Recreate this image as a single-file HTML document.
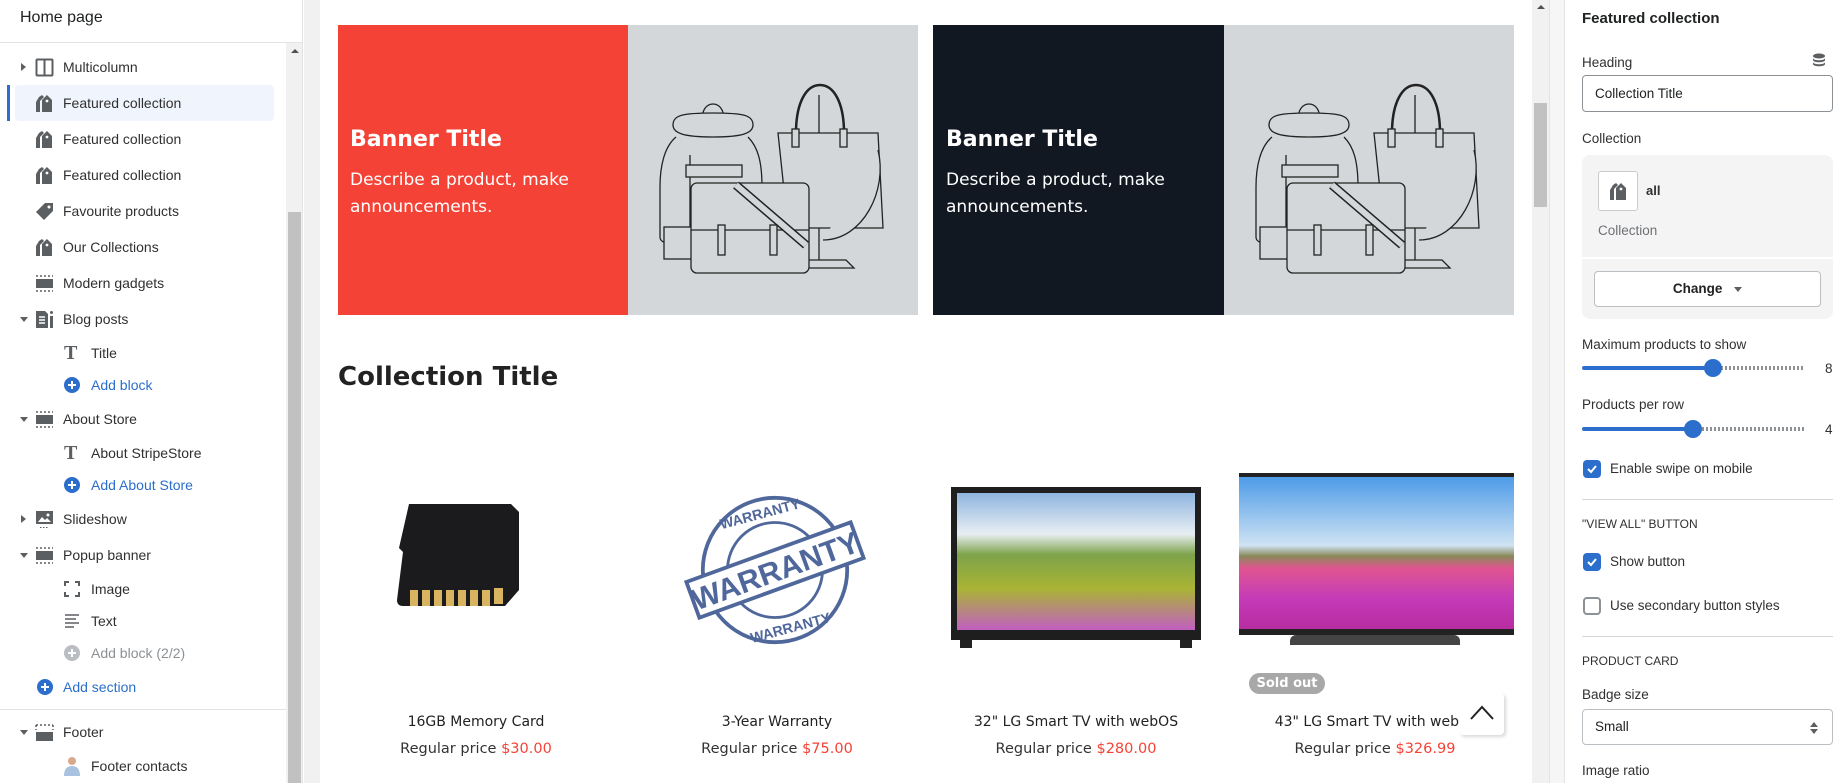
<!DOCTYPE html>
<html><head><meta charset="utf-8"><style>
*{box-sizing:border-box;margin:0;padding:0}
body{width:1848px;height:783px;overflow:hidden;background:#fff;font-family:"Liberation Sans",sans-serif;color:#303030;position:relative}
.abs{position:absolute}
.side{left:0;top:0;width:303px;height:783px;background:#fff;border-right:1px solid #e3e3e3}
.row{position:absolute;left:0;height:36px;display:flex;align-items:center;font-size:14px;color:#303030;white-space:nowrap}
.row .t{position:absolute;left:63px}
.row.b .t{left:91px}
.blue{color:#2c6ecb}
.caret{position:absolute;left:21px;width:0;height:0}
.cr{border-top:4px solid transparent;border-bottom:4px solid transparent;border-left:5px solid #5c5f62}
.cd{border-left:4px solid transparent;border-right:4px solid transparent;border-top:5px solid #5c5f62;left:20px}
.ic{position:absolute;left:35px}
.bi{position:absolute;left:64px}
.prod{position:absolute;text-align:center;font-family:"DejaVu Sans","Liberation Sans",sans-serif;width:290px}
.pt{font-size:14px;color:#222;top:0}
.pp{font-size:14.5px;color:#333}
.pp b{font-weight:normal;color:#f44336}
.lbl{position:absolute;left:1582px;font-size:13.5px;color:#303030}
.cb{position:absolute;left:1583px;width:18px;height:18px;border-radius:4px;background:#2c6ecb}
.hr{position:absolute;left:1582px;width:251px;height:1px;background:#d6d6d6}
</style></head><body>

<div class="abs side">
  <div class="abs" style="left:20px;top:9px;font-size:16px;color:#202223">Home page</div>
  <div class="abs" style="left:0;top:42px;width:303px;height:1px;background:#e1e3e5"></div>
  <div class="abs" style="left:286px;top:43px;width:16px;height:740px;background:#f1f1f1"></div>
  <div class="abs" style="left:288px;top:212px;width:13px;height:571px;background:#c1c1c1"></div>
  <div class="abs" style="left:291px;top:49px;border-left:4px solid transparent;border-right:4px solid transparent;border-bottom:4px solid #505050"></div>

  <div class="abs" style="left:15px;top:85px;width:259px;height:36px;background:#f0f5fd;border-radius:4px"></div>
  <div class="abs" style="left:7px;top:85px;width:3px;height:36px;background:#2c6ecb"></div>

  <div class="row" style="top:49px"><span class="caret cr"></span><svg class="ic" width="19" height="19" viewBox="0 0 19 19"><rect x="1.5" y="1.5" width="16" height="16" rx="1" fill="none" stroke="#5c5f62" stroke-width="2"/><line x1="9.5" y1="2" x2="9.5" y2="17" stroke="#5c5f62" stroke-width="2"/></svg><span class="t">Multicolumn</span></div>
  <div class="row" style="top:85px"><svg class="ic" width="19" height="19" viewBox="0 0 19 19"><path d="M4 3l3-2 2 2-4 4v11H1V8z" fill="#5c5f62"/><path d="M12 1l5 5v12H7V6z" fill="#5c5f62"/><circle cx="12" cy="7" r="1.4" fill="#fff"/></svg><span class="t">Featured collection</span></div>
  <div class="row" style="top:121px"><svg class="ic" width="19" height="19" viewBox="0 0 19 19"><path d="M4 3l3-2 2 2-4 4v11H1V8z" fill="#5c5f62"/><path d="M12 1l5 5v12H7V6z" fill="#5c5f62"/><circle cx="12" cy="7" r="1.4" fill="#fff"/></svg><span class="t">Featured collection</span></div>
  <div class="row" style="top:157px"><svg class="ic" width="19" height="19" viewBox="0 0 19 19"><path d="M4 3l3-2 2 2-4 4v11H1V8z" fill="#5c5f62"/><path d="M12 1l5 5v12H7V6z" fill="#5c5f62"/><circle cx="12" cy="7" r="1.4" fill="#fff"/></svg><span class="t">Featured collection</span></div>
  <div class="row" style="top:193px"><svg class="ic" width="19" height="19" viewBox="0 0 19 19"><path d="M10 1h8v8l-9 9-8-8z" fill="#5c5f62"/><circle cx="14" cy="5" r="1.5" fill="#fff"/></svg><span class="t">Favourite products</span></div>
  <div class="row" style="top:229px"><svg class="ic" width="19" height="19" viewBox="0 0 19 19"><path d="M4 3l3-2 2 2-4 4v11H1V8z" fill="#5c5f62"/><path d="M12 1l5 5v12H7V6z" fill="#5c5f62"/><circle cx="12" cy="7" r="1.4" fill="#fff"/></svg><span class="t">Our Collections</span></div>
  <div class="row" style="top:265px"><svg class="ic" width="19" height="19" viewBox="0 0 19 19"><rect x="1" y="5" width="17" height="9" fill="#5c5f62"/><path d="M1 2h17M1 17h17" stroke="#5c5f62" stroke-width="1.5" stroke-dasharray="2 2"/></svg><span class="t">Modern gadgets</span></div>
  <div class="row" style="top:301px"><span class="caret cd"></span><svg class="ic" width="19" height="19" viewBox="0 0 19 19"><path d="M1 1h9l3 3v14H1z" fill="#5c5f62"/><path d="M4 7h6M4 10h6M4 13h6" stroke="#fff" stroke-width="1.5"/><rect x="15" y="6" width="3" height="12" fill="#5c5f62"/><circle cx="16.5" cy="2.5" r="1.5" fill="#5c5f62"/></svg><span class="t">Blog posts</span></div>
  <div class="row b" style="top:335px"><span class="bi" style="font-family:'Liberation Serif',serif;font-weight:bold;font-size:20px;color:#5c5f62;left:64px">T</span><span class="t">Title</span></div>
  <div class="row b" style="top:367px"><svg class="bi" width="16" height="16" viewBox="0 0 16 16"><circle cx="8" cy="8" r="8" fill="#2c6ecb"/><path d="M8 4v8M4 8h8" stroke="#fff" stroke-width="2"/></svg><span class="t blue">Add block</span></div>
  <div class="row" style="top:401px"><span class="caret cd"></span><svg class="ic" width="19" height="19" viewBox="0 0 19 19"><rect x="1" y="5" width="17" height="9" fill="#5c5f62"/><path d="M1 2h17M1 17h17" stroke="#5c5f62" stroke-width="1.5" stroke-dasharray="2 2"/></svg><span class="t">About Store</span></div>
  <div class="row b" style="top:435px"><span class="bi" style="font-family:'Liberation Serif',serif;font-weight:bold;font-size:20px;color:#5c5f62">T</span><span class="t">About StripeStore</span></div>
  <div class="row b" style="top:467px"><svg class="bi" width="16" height="16" viewBox="0 0 16 16"><circle cx="8" cy="8" r="8" fill="#2c6ecb"/><path d="M8 4v8M4 8h8" stroke="#fff" stroke-width="2"/></svg><span class="t blue">Add About Store</span></div>
  <div class="row" style="top:501px"><span class="caret cr"></span><svg class="ic" width="19" height="19" viewBox="0 0 19 19"><rect x="1" y="1" width="17" height="13" fill="#5c5f62"/><path d="M3 12l4-5 3 3 2-2 4 4z" fill="#fff"/><circle cx="13" cy="5" r="1.5" fill="#fff"/><path d="M5 17.5h9" stroke="#5c5f62" stroke-dasharray="1.5 1.5"/></svg><span class="t">Slideshow</span></div>
  <div class="row" style="top:537px"><span class="caret cd"></span><svg class="ic" width="19" height="19" viewBox="0 0 19 19"><rect x="1" y="5" width="17" height="9" fill="#5c5f62"/><path d="M1 2h17M1 17h17" stroke="#5c5f62" stroke-width="1.5" stroke-dasharray="2 2"/></svg><span class="t">Popup banner</span></div>
  <div class="row b" style="top:571px"><svg class="bi" width="16" height="16" viewBox="0 0 16 16" fill="none" stroke="#5c5f62" stroke-width="2"><path d="M1 5V1h4M11 1h4v4M15 11v4h-4M5 15H1v-4"/></svg><span class="t">Image</span></div>
  <div class="row b" style="top:603px"><svg class="bi" width="16" height="16" viewBox="0 0 16 16" stroke="#5c5f62" stroke-width="1.6"><path d="M1 2h14M1 6h11M1 10h14M1 14h9"/></svg><span class="t">Text</span></div>
  <div class="row b" style="top:635px"><svg class="bi" width="16" height="16" viewBox="0 0 16 16"><circle cx="8" cy="8" r="8" fill="#babec3"/><path d="M8 4v8M4 8h8" stroke="#fff" stroke-width="2"/></svg><span class="t" style="color:#8c9196">Add block (2/2)</span></div>
  <div class="row" style="top:669px"><svg class="ic" width="16" height="16" viewBox="0 0 16 16" style="left:37px"><circle cx="8" cy="8" r="8" fill="#2c6ecb"/><path d="M8 4v8M4 8h8" stroke="#fff" stroke-width="2"/></svg><span class="t blue">Add section</span></div>
  <div class="abs" style="left:0;top:709px;width:286px;height:1px;background:#e1e3e5"></div>
  <div class="row" style="top:714px"><span class="caret cd"></span><svg class="ic" width="19" height="19" viewBox="0 0 19 19"><rect x="1" y="9" width="17" height="9" fill="#5c5f62"/><path d="M1 2h17M1 2v5M18 2v5" stroke="#5c5f62" stroke-width="1.5" stroke-dasharray="2 2"/></svg><span class="t">Footer</span></div>
  <div class="row b" style="top:748px"><svg class="bi" width="20" height="20" viewBox="0 0 20 20" style="left:62px"><circle cx="10" cy="5" r="4" fill="#d9a98e"/><path d="M2 20c0-8 4-10 8-10s8 2 8 10z" fill="#a9c2e0"/></svg><span class="t">Footer contacts</span></div>
</div>
<div class="abs" style="left:304px;top:0;width:16px;height:783px;background:#f1f1f1"></div>

<svg width="0" height="0" style="position:absolute"><defs>
<g id="bags" fill="#d4d7da" stroke="#222" stroke-width="1.3">
  <path d="M75 95c-2-10 4-16 10-16s12 6 10 16"/>
  <path d="M45 100c0-10 10-12 40-12s40 2 40 12c0 8-10 12-40 12s-40-4-40-12z"/>
  <path d="M48 112c-12 10-16 30-16 50v50c0 4 4 6 10 6h20V130"/>
  <path d="M120 112c10 10 14 25 14 50"/>
  <rect x="36" y="202" width="40" height="32"/>
  <rect x="58" y="140" width="56" height="12"/>
  <path d="M191 70v165M178 235h40l8 8h-50z"/>
  <path d="M168 108c0-30 10-48 24-48s24 18 24 48" fill="none" stroke-width="2.5"/>
  <path d="M150 108h100l5 95h-95z"/>
  <rect x="164" y="104" width="7" height="18"/><rect x="212" y="104" width="7" height="18"/>
  <path d="M250 125c10 40-15 90-55 90"/>
  <rect x="63" y="158" width="118" height="90" rx="6"/>
  <path d="M63 205h118"/>
  <path d="M108 160l70 60" stroke-width="9" stroke="#222"/>
  <path d="M108 160l70 60" stroke-width="6" stroke="#d4d7da"/>
  <rect x="90" y="200" width="7" height="30"/><rect x="142" y="200" width="7" height="30"/>
</g></defs></svg>

<div class="abs" style="left:338px;top:25px;width:290px;height:290px;background:#f44336"></div>
<div class="abs" style="left:628px;top:25px;width:290px;height:290px;background:#d4d7da"><svg width="290" height="290" viewBox="0 0 290 290"><use href="#bags"/></svg></div>
<div class="abs" style="left:933px;top:25px;width:291px;height:290px;background:#111822"></div>
<div class="abs" style="left:1224px;top:25px;width:290px;height:290px;background:#d4d7da"><svg width="290" height="290" viewBox="0 0 290 290"><use href="#bags"/></svg></div>
<div class="abs" style="left:350px;top:127px;color:#fff;font-family:'DejaVu Sans',sans-serif;font-weight:bold;font-size:22px">Banner Title</div>
<div class="abs" style="left:350px;top:167px;color:#fff;font-family:'DejaVu Sans',sans-serif;font-size:17px;line-height:27px;width:240px">Describe a product, make announcements.</div>
<div class="abs" style="left:946px;top:127px;color:#fff;font-family:'DejaVu Sans',sans-serif;font-weight:bold;font-size:22px">Banner Title</div>
<div class="abs" style="left:946px;top:167px;color:#fff;font-family:'DejaVu Sans',sans-serif;font-size:17px;line-height:27px;width:240px">Describe a product, make announcements.</div>

<div class="abs" style="left:338px;top:362px;font-family:'DejaVu Sans',sans-serif;font-weight:bold;font-size:26px;color:#222">Collection Title</div>

<svg class="abs" style="left:395px;top:500px" width="150" height="118" viewBox="0 0 150 118"><path d="M14 4h102l8 8v78l-14 16H8q-6 0-6-6l6-48-4-4z" fill="#1b1b1d"/><g fill="#d8b460"><rect x="15" y="90" width="8" height="16"/><rect x="27" y="90" width="8" height="16"/><rect x="39" y="90" width="8" height="16"/><rect x="51" y="90" width="8" height="16"/><rect x="63" y="90" width="8" height="16"/><rect x="75" y="90" width="8" height="16"/><rect x="87" y="90" width="8" height="16"/><rect x="99" y="88" width="9" height="16"/></g></svg>
<svg class="abs" style="left:680px;top:480px" width="190" height="180" viewBox="0 0 200 180"><g fill="none" stroke="#4f679b"><circle cx="100" cy="90" r="76" stroke-width="4"/><circle cx="100" cy="90" r="50" stroke-width="3"/></g><g transform="rotate(-20 100 90)"><rect x="8" y="70" width="184" height="40" fill="#fff" stroke="#4f679b" stroke-width="4"/><text x="100" y="102" text-anchor="middle" font-family="Liberation Sans" font-weight="bold" font-size="32" fill="#4f679b">WARRANTY</text></g><text x="100" y="34" text-anchor="middle" font-family="Liberation Sans" font-weight="bold" font-size="15" fill="#4f679b" transform="rotate(-15 100 90)">WARRANTY</text><text x="100" y="158" text-anchor="middle" font-family="Liberation Sans" font-weight="bold" font-size="15" fill="#4f679b" transform="rotate(-15 100 90)">WARRANTY</text></svg>
<div class="abs" style="left:951px;top:487px;width:250px;height:153px;background:#1e1e1e;padding:6px 6px 10px"><div style="width:100%;height:100%;background:linear-gradient(180deg,#8fb5e0 0%,#e8eef2 30%,#7da34a 45%,#a9b434 70%,#c25fc1 100%)"></div></div>
<div class="abs" style="left:960px;top:640px;width:12px;height:8px;background:#222"></div><div class="abs" style="left:1180px;top:640px;width:12px;height:8px;background:#222"></div>
<div class="abs" style="left:1239px;top:473px;width:275px;height:162px;background:#222;padding:4px 0 6px"><div style="width:100%;height:100%;background:linear-gradient(180deg,#4d9be8 0%,#cfe3f3 45%,#8a8a5a 52%,#e05590 60%,#c43bb8 80%,#b72ca0 100%)"></div></div>
<div class="abs" style="left:1290px;top:635px;width:170px;height:10px;border-radius:6px 6px 0 0;background:#444"></div>
<div class="abs" style="left:1249px;top:673px;width:76px;height:21px;border-radius:11px;background:#a8a8a8;color:#fff;font-family:'DejaVu Sans',sans-serif;font-weight:bold;font-size:13px;text-align:center;line-height:21px">Sold out</div>

<div class="prod pt" style="left:331px;top:714px">16GB Memory Card</div>
<div class="prod pp" style="left:331px;top:741px">Regular price <b>$30.00</b></div>
<div class="prod pt" style="left:632px;top:714px">3-Year Warranty</div>
<div class="prod pp" style="left:632px;top:741px">Regular price <b>$75.00</b></div>
<div class="prod pt" style="left:931px;top:714px">32" LG Smart TV with webOS</div>
<div class="prod pp" style="left:931px;top:741px">Regular price <b>$280.00</b></div>
<div class="prod pt" style="left:1239px;top:714px;width:220px;text-align:right;overflow:hidden;white-space:nowrap">43" LG Smart TV with web</div>
<div class="prod pp" style="left:1230px;top:741px">Regular price <b>$326.99</b></div>
<div class="abs" style="left:1459px;top:693px;width:45px;height:42px;background:#fff;border-radius:4px;box-shadow:2px 2px 3px rgba(0,0,0,.15)"><svg width="45" height="42"><path d="M12 26l11-12 11 12" fill="none" stroke="#222" stroke-width="2"/></svg></div>

<div class="abs" style="left:1532px;top:0;width:17px;height:783px;background:#f1f1f1"></div>
<div class="abs" style="left:1534px;top:103px;width:13px;height:104px;background:#c1c1c1"></div>
<div class="abs" style="left:1537px;top:5px;border-left:4px solid transparent;border-right:4px solid transparent;border-bottom:4px solid #505050"></div>
<div class="abs" style="left:1549px;top:0;width:16px;height:783px;background:#f6f6f7;border-left:1px solid #e3e3e3;border-right:1px solid #e3e3e3"></div>

<div class="lbl" style="top:10px;font-weight:bold;font-size:15px;color:#202223">Featured collection</div>
<div class="lbl" style="top:55px">Heading</div>
<svg class="abs" style="left:1812px;top:53px" width="14" height="14" viewBox="0 0 14 14" fill="#5c5f62"><ellipse cx="7" cy="3" rx="6" ry="2.5"/><path d="M1 5c0 3 12 3 12 0v2c0 3-12 3-12 0zM1 9c0 3 12 3 12 0v2c0 3-12 3-12 0z"/></svg>
<div class="abs" style="left:1582px;top:75px;width:251px;height:37px;border:1px solid #8c9196;border-radius:4px;font-size:13.5px;padding:10px 12px;color:#202223">Collection Title</div>
<div class="lbl" style="top:131px">Collection</div>
<div class="abs" style="left:1582px;top:155px;width:251px;height:164px;background:#f4f4f4;border-radius:8px"></div>
<div class="abs" style="left:1582px;top:257px;width:251px;height:2px;background:#fff"></div>
<div class="abs" style="left:1598px;top:171px;width:40px;height:40px;background:#fff;border:1px solid #c9cccf;border-radius:3px"><svg style="margin:10px" width="19" height="19" viewBox="0 0 19 19"><path d="M4 3l3-2 2 2-4 4v11H1V8z" fill="#5c5f62"/><path d="M12 1l5 5v12H7V6z" fill="#5c5f62"/><circle cx="12" cy="7" r="1.4" fill="#fff"/></svg></div>
<div class="lbl" style="left:1646px;top:183px;font-weight:bold;font-size:13px">all</div>
<div class="lbl" style="left:1598px;top:223px;color:#6d7175">Collection</div>
<div class="abs" style="left:1594px;top:271px;width:227px;height:36px;background:#fff;border:1px solid #babfc3;border-radius:4px;text-align:center;line-height:34px;font-size:13.5px;font-weight:bold;color:#202223">Change <span style="display:inline-block;margin-left:8px;vertical-align:middle;border-left:4px solid transparent;border-right:4px solid transparent;border-top:5px solid #5c5f62"></span></div>

<div class="lbl" style="top:337px">Maximum products to show</div>
<div class="abs" style="left:1582px;top:366px;width:131px;height:4px;background:#2c6ecb;border-radius:2px"></div>
<div class="abs" style="left:1713px;top:366px;width:92px;height:4px;background:repeating-linear-gradient(90deg,#8c9196 0 2px,#fff 2px 4px)"></div>
<div class="abs" style="left:1704px;top:359px;width:18px;height:18px;border-radius:50%;background:#2c6ecb"></div>
<div class="lbl" style="left:1825px;top:361px">8</div>

<div class="lbl" style="top:397px">Products per row</div>
<div class="abs" style="left:1582px;top:427px;width:112px;height:4px;background:#2c6ecb;border-radius:2px"></div>
<div class="abs" style="left:1694px;top:427px;width:111px;height:4px;background:repeating-linear-gradient(90deg,#8c9196 0 2px,#fff 2px 4px)"></div>
<div class="abs" style="left:1684px;top:420px;width:18px;height:18px;border-radius:50%;background:#2c6ecb"></div>
<div class="lbl" style="left:1825px;top:422px">4</div>

<div class="cb" style="top:460px"><svg width="18" height="18"><path d="M5 9l3 3 5-6" fill="none" stroke="#fff" stroke-width="2"/></svg></div>
<div class="lbl" style="left:1610px;top:461px">Enable swipe on mobile</div>
<div class="hr" style="top:499px"></div>
<div class="lbl" style="top:517px;font-size:12px">"VIEW ALL" BUTTON</div>
<div class="cb" style="top:553px"><svg width="18" height="18"><path d="M5 9l3 3 5-6" fill="none" stroke="#fff" stroke-width="2"/></svg></div>
<div class="lbl" style="left:1610px;top:554px">Show button</div>
<div class="cb" style="top:597px;background:#fff;border:2px solid #8c9196"></div>
<div class="lbl" style="left:1610px;top:598px">Use secondary button styles</div>
<div class="hr" style="top:636px"></div>
<div class="lbl" style="top:654px;font-size:12px">PRODUCT CARD</div>
<div class="lbl" style="top:687px">Badge size</div>
<div class="abs" style="left:1582px;top:709px;width:251px;height:36px;border:1px solid #babfc3;border-radius:4px;font-size:13.5px;padding:9px 12px;color:#202223">Small<svg style="position:absolute;right:14px;top:12px" width="8" height="12"><path d="M0 5l4-5 4 5zM0 7l4 5 4-5z" fill="#5c5f62"/></svg></div>
<div class="lbl" style="top:763px">Image ratio</div>
</body></html>
